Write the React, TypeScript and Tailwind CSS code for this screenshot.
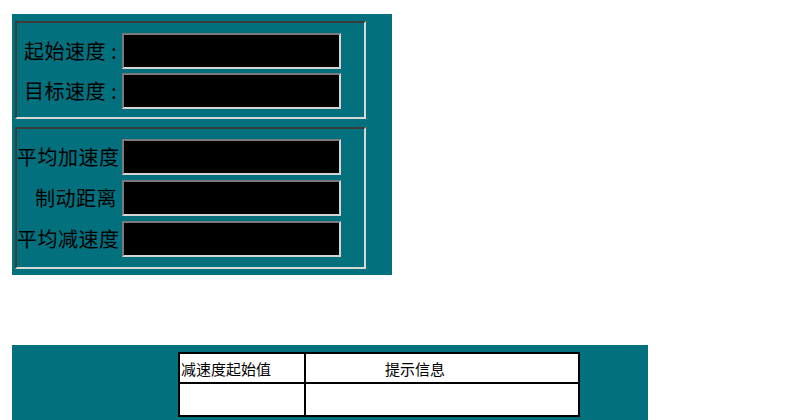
const TEAL = "bg-[#03707e]";

function Field({ label }: { label: string }) {
  return (
    <div className="flex items-center">
      <div className="w-[100px] text-right text-[20px] leading-none text-black whitespace-nowrap tracking-[0.5px]">
        {label}
      </div>
      <div className="ml-[5px] h-[36px] w-[219px] border-2 border-t-[#7a7a7a] border-l-[#7a7a7a] border-b-[#d4d4d4] border-r-[#d4d4d4] bg-black" />
    </div>
  );
}

function GroupBox({ labels, gap, pad }: { labels: string[]; gap: string; pad: string }) {
  return (
    <div className="w-[351px] border-2 border-t-[#3c3c3c] border-l-[#3c3c3c] border-b-[#d8d8d8] border-r-[#d8d8d8]">
      <div className={`flex flex-col ${gap} ${pad}`}>
        {labels.map((l) => (
          <Field key={l} label={l} />
        ))}
      </div>
    </div>
  );
}

export default function App() {
  return (
    <div
      className="w-[800px] h-[420px] bg-white overflow-hidden"
      style={{ fontFamily: '"Noto Sans CJK SC", "Noto Sans", sans-serif' }}
    >
      {/* speed panel */}
      <div className={`ml-[12px] mt-[14px] w-[380px] h-[261px] ${TEAL} pl-[3px] pt-[7px]`}>
        <GroupBox labels={["起始速度 :", "目标速度 :"]} gap="gap-[4px]" pad="pt-[10px] pb-[8px]" />
        <div className="mt-[8px]">
          <GroupBox
            labels={["平均加速度", "制动距离", "平均减速度"]}
            gap="gap-[5px]"
            pad="pt-[10px] pb-[10px]"
          />
        </div>
      </div>

      {/* info panel */}
      <div className={`ml-[12px] mt-[70px] w-[636px] h-[75px] ${TEAL} pl-[166px] pt-[7px]`}>
        <div className="grid w-[402px] grid-cols-[126px_1fr] grid-rows-[30px_31px] border-2 border-black bg-white text-[15px] leading-none text-black">
          <div className="flex items-center border-r-2 border-b-2 border-black pl-[1px]">减速度起始值</div>
          <div className="flex items-center border-b-2 border-black pl-[79px]">提示信息</div>
          <div className="border-r-2 border-black" />
          <div />
        </div>
      </div>
    </div>
  );
}
